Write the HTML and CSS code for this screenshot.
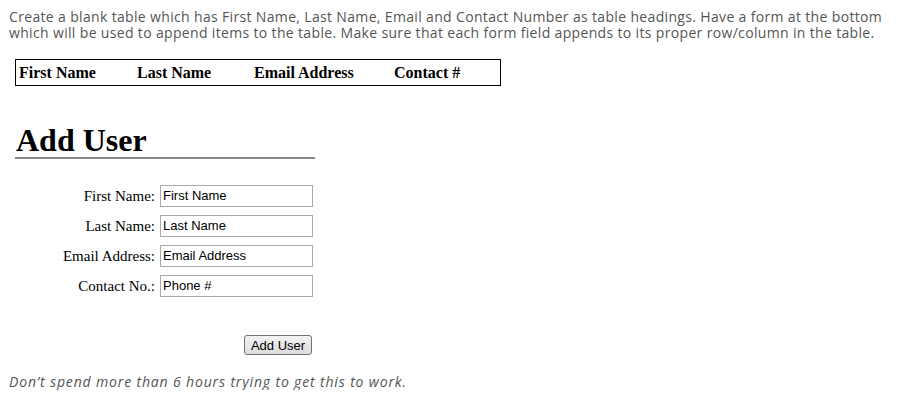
FILE: index.html
```html
<!DOCTYPE html>
<html>
<head>
<meta charset="utf-8">
<link rel="stylesheet" href="styles.css">
</head>
<body>
<p class="intro">Create a blank table which has First Name, Last Name, Email and Contact Number as table headings. Have a form at the bottom which will be used to append items to the table. Make sure that each form field appends to its proper row/column in the table.</p>
<table class="users">
  <thead>
    <tr>
      <th class="c1">First Name</th>
      <th class="c2">Last Name</th>
      <th class="c3">Email Address</th>
      <th class="c4">Contact #</th>
    </tr>
  </thead>
</table>
<h1 class="title">Add User</h1>
<form class="form">
  <label class="lbl">First Name:</label><input class="fld" type="text" value="First Name">
  <label class="lbl">Last Name:</label><input class="fld" type="text" value="Last Name">
  <label class="lbl">Email Address:</label><input class="fld" type="text" value="Email Address">
  <label class="lbl">Contact No.:</label><input class="fld" type="text" value="Phone #">
  <span></span><button class="btn" type="button">Add User</button>
</form>
<p class="note">Don’t spend more than 6 hours trying to get this to work.</p>
</body>
</html>
```
FILE: styles.css
```css
html, body {
  margin: 0;
  padding: 0;
  background: #fff;
}
body {
  font-family: "Times New Roman", "Liberation Serif", serif;
  color: #000;
}
.intro {
  margin: 0;
  padding: 9px 9px 0 9px;
  font-family: "Open Sans", sans-serif;
  font-size: 14px;
  line-height: 16px;
  letter-spacing: 0.34px;
  color: #555;
  width: 898px;
  box-sizing: border-box;
}
.users {
  margin: 18px 0 0 15px;
  border: 1px solid #000;
  border-collapse: separate;
  border-spacing: 0;
  width: 486px;
}
.users th {
  text-align: left;
  font-size: 16px;
  font-weight: bold;
  padding: 4px 0 4px 3px;
  line-height: 17px;
}
.c1 { width: 115px; }
.c2 { width: 114px; }
.c3 { width: 137px; }
.title {
  margin: 37px 0 0 15px;
  width: 300px;
  font-size: 32px;
  line-height: 34px;
  font-weight: bold;
  border-bottom: 2px solid #888;
  padding-left: 1px;
  box-sizing: border-box;
}
.form {
  display: grid;
  grid-template-columns: 155px 153px;
  column-gap: 5px;
  row-gap: 8px;
  margin-top: 26px;
  align-items: center;
}
.lbl {
  text-align: right;
  font-size: 15px;
}
.fld {
  box-sizing: border-box;
  width: 153px;
  height: 22px;
  margin: 0;
  border: 1px solid #a9a9a9;
  padding: 0 2px 2px 2px;
  font-family: Arial, "Liberation Sans", sans-serif;
  font-size: 13px;
  color: #000;
}
.btn {
  justify-self: start;
  margin: 30px 0 0 84px;
  width: 68px;
  height: 20px;
  padding: 0;
  border: 1px solid #707070;
  border-radius: 3px;
  background: linear-gradient(#f3f3f3, #dcdcdc);
  font-family: Arial, "Liberation Sans", sans-serif;
  font-size: 13px;
  color: #000;
}
.note {
  margin: 19px 0 0 9px;
  font-family: "Open Sans", sans-serif;
  font-style: italic;
  font-size: 14px;
  line-height: 16px;
  letter-spacing: 0.85px;
  color: #555;
}
```
